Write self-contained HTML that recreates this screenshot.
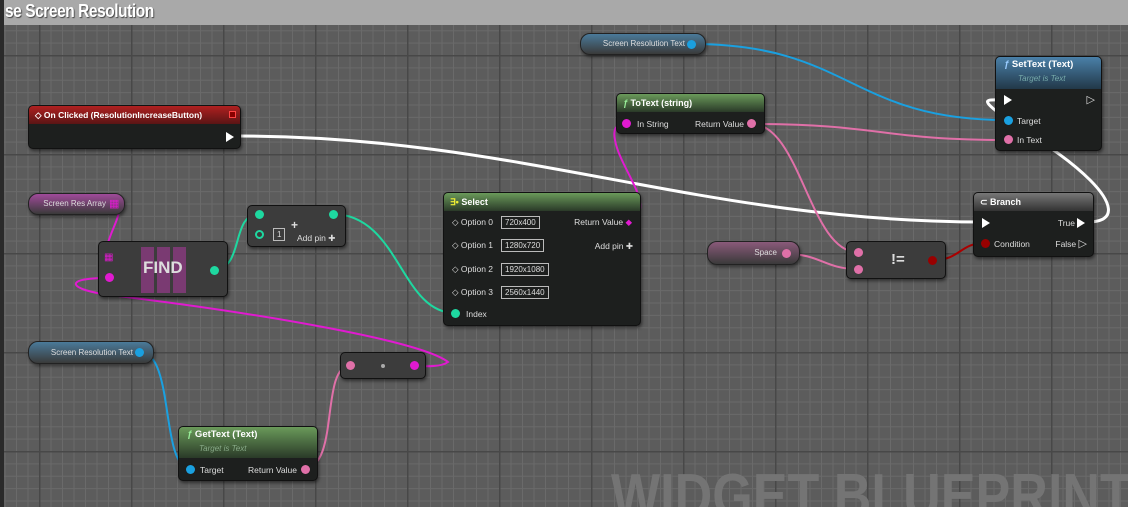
<!DOCTYPE html>
<html><head><meta charset="utf-8"><style>
*{margin:0;padding:0;box-sizing:border-box}
html,body{width:1128px;height:507px;overflow:hidden}
body{background:#5b5b5b;font-family:"Liberation Sans",sans-serif;position:relative}
#grid{position:absolute;left:4px;top:25px;width:1124px;height:482px;overflow:hidden;
background-color:#5c5c5c;
background-image:
linear-gradient(to right,#484848 1.5px,transparent 1.5px),
linear-gradient(to bottom,#484848 1.5px,transparent 1.5px),
linear-gradient(to right,#6a6a6a 1px,transparent 1px),
linear-gradient(to bottom,#6a6a6a 1px,transparent 1px);
background-size:92px 99px,92px 99px,11.5px 12.375px,11.5px 12.375px;
background-position:35px 30px,35px 30px,35px 30px,35px 30px}
#leftbar{position:absolute;left:0;top:0;width:4px;height:507px;background:#2a2a2a}
#title{position:absolute;left:4px;top:0;width:1124px;height:25px;background:#a9a9a9;color:#fff;font-size:18px;font-weight:bold;line-height:23px;padding-left:1px;text-shadow:1px 1px 1px #444;letter-spacing:-0.5px;white-space:nowrap}
#title span{display:inline-block;transform:scaleX(0.86);transform-origin:left}
#wm{position:absolute;font-size:62px;font-weight:bold;color:#747474;white-space:nowrap;transform:scaleX(0.84);transform-origin:left}
svg{position:absolute;left:0;top:0}
.n{position:absolute;background:#1d1f1e;border:1px solid #111;border-radius:5px;box-shadow:1px 2px 3px rgba(0,0,0,.5);color:#ddd;font-size:9px}
.h{height:18px;border-radius:4px 4px 0 0;color:#fff;font-size:9px;font-weight:bold;line-height:18px;padding-left:6px;white-space:nowrap;overflow:hidden}
.pill{position:absolute;background:linear-gradient(#666,#3a3a3a);border:1px solid #222;border-radius:10px;color:#ddd;font-size:8px;text-align:right;box-shadow:1px 2px 3px rgba(0,0,0,.5)}
.p{position:absolute;width:9px;height:9px;border-radius:50%}
.t{position:absolute;font-size:8.5px;color:#ddd;white-space:nowrap}
.box{position:absolute;border:1px solid #bbb;font-size:8px;color:#ddd;padding:0 3px;height:13px;line-height:11px}
.ex{position:absolute;width:0;height:0;border-top:5px solid transparent;border-bottom:5px solid transparent;border-left:8px solid #fff}
</style></head><body>
<div id="grid"><div id="wm" style="left:607px;top:436px">WIDGET BLUEPRINT</div></div>
<div id="leftbar"></div>
<div id="title"><span>se Screen Resolution</span></div>

<svg width="1128" height="507" fill="none">
<path d="M238 136 C520 136 700 222 985 222" stroke="#fff" stroke-width="3"/>
<path d="M1087 222 C1120 222 1110 200 1090 180 C1060 150 1020 130 995 110 C980 98 990 100 1003 100" stroke="#fff" stroke-width="3"/>
<path d="M692 44 C850 44 850 120 1007 120" stroke="#1aa0e0" stroke-width="2"/>
<path d="M752 124 C880 124 880 140 1007 140" stroke="#e070a8" stroke-width="2"/>
<path d="M752 124 C800 124 810 252 857 252" stroke="#e070a8" stroke-width="2"/>
<path d="M787 254 C820 254 825 269 857 269" stroke="#e070a8" stroke-width="2"/>
<path d="M934 260 C960 260 960 243 985 243" stroke="#a00" stroke-width="2"/>
<path d="M628 222 C660 210 620 170 615 140 C612 125 620 124 626 124" stroke="#e01ad0" stroke-width="2"/>
<path d="M114 204 C130 210 100 240 108 260" stroke="#e01ad0" stroke-width="2"/>
<path d="M108 278 C60 278 70 290 110 295 C250 312 420 340 448 362 C440 368 420 366 412 366" stroke="#e01ad0" stroke-width="2"/>
<path d="M213 270 C245 270 230 214 259 214" stroke="#1ed8a0" stroke-width="2"/>
<path d="M332 214 C400 214 400 313 455 313" stroke="#1ed8a0" stroke-width="2"/>
<path d="M140 352 C175 352 160 468 190 468" stroke="#1aa0e0" stroke-width="2"/>
<path d="M304 468 C340 468 320 366 350 366" stroke="#e070a8" stroke-width="2"/>
</svg>

<div class="n" style="left:28px;top:105px;width:213px;height:44px">
<div class="h" style="background:linear-gradient(#b02020,#5a1515);font-size:8.5px">◇ On Clicked (ResolutionIncreaseButton)</div>
<div style="position:absolute;right:4px;top:5px;width:7px;height:7px;border:1.5px solid #f44;background:#800"></div>
<div class="ex" style="right:6px;top:26px"></div></div>

<div class="pill" style="left:28px;top:193px;width:97px;height:22px;line-height:20px;padding-right:18px;background:linear-gradient(#a04a9a,#3a3a3a)">Screen Res Array</div>
<div class="t" style="left:109px;top:197px;color:#e01ad0;font-size:11px">▦</div>

<div class="n" style="left:98px;top:241px;width:130px;height:56px;background:#3c3c3c">
<div style="position:absolute;left:42px;top:5px;width:46px;height:46px;background:repeating-linear-gradient(90deg,#8a3a80 0 13px,transparent 13px 16px);opacity:.8"></div>
<div style="position:absolute;left:44px;top:16px;font-size:17px;font-weight:bold;color:#ddd">FIND</div>
<div class="t" style="left:5px;top:10px;color:#e01ad0;font-size:10px">▦</div>
<div class="p" style="left:6px;top:31px;background:#e01ad0"></div>
<div class="p" style="right:8px;top:24px;background:#1ed8a0"></div></div>

<div class="n" style="left:247px;top:205px;width:99px;height:42px;background:#3c3c3c">
<div class="p" style="left:7px;top:4px;background:#1ed8a0"></div>
<div class="p" style="right:7px;top:4px;background:#1ed8a0"></div>
<div class="p" style="left:7px;top:24px;border:2px solid #1ed8a0"></div>
<div class="box" style="left:25px;top:22px">1</div>
<div class="t" style="left:43px;top:12px;font-size:12px;font-weight:bold">+</div>
<div class="t" style="left:49px;top:27px">Add pin ✚</div></div>

<div class="n" style="left:443px;top:192px;width:198px;height:134px">
<div class="h" style="background:linear-gradient(#6a9a5a,#2a3a28)"><span style="color:#ee3">∃•</span> Select</div>
<div class="t" style="left:8px;top:24px">◇ Option 0</div><div class="box" style="left:57px;top:23px">720x400</div>
<div class="t" style="left:8px;top:47px">◇ Option 1</div><div class="box" style="left:57px;top:46px">1280x720</div>
<div class="t" style="left:8px;top:71px">◇ Option 2</div><div class="box" style="left:57px;top:70px">1920x1080</div>
<div class="t" style="left:8px;top:94px">◇ Option 3</div><div class="box" style="left:57px;top:93px">2560x1440</div>
<div class="p" style="left:7px;top:116px;background:#1ed8a0"></div><div class="t" style="left:22px;top:116px">Index</div>
<div class="t" style="right:8px;top:24px">Return Value <span style="color:#e01ad0">◆</span></div>
<div class="t" style="right:7px;top:48px">Add pin ✚</div></div>

<div class="n" style="left:616px;top:93px;width:149px;height:41px">
<div class="h" style="background:linear-gradient(#6a9a5a,#2a3a28)"><i style="color:#9e9">ƒ</i> ToText (string)</div>
<div class="p" style="left:5px;top:25px;background:#e01ad0"></div><div class="t" style="left:20px;top:25px">In String</div>
<div class="t" style="right:20px;top:25px">Return Value</div><div class="p" style="right:8px;top:25px;background:#e070a8"></div></div>

<div class="pill" style="left:580px;top:33px;width:126px;height:22px;line-height:20px;padding-right:20px;background:linear-gradient(#4a7a9a,#3a3a3a)">Screen Resolution Text</div>
<div class="p" style="left:687px;top:40px;background:#1aa0e0"></div>

<div class="n" style="left:995px;top:56px;width:107px;height:95px">
<div style="height:32px;border-radius:4px 4px 0 0;background:linear-gradient(#4a80a8,#223848);padding-left:8px;color:#fff;font-size:9.5px;font-weight:bold;line-height:16px"><i style="color:#9cf">ƒ</i> SetText (Text)<div style="font-size:8px;font-weight:normal;font-style:italic;color:#7aa;padding-left:14px;line-height:11px">Target is Text</div></div>
<div class="ex" style="left:8px;top:38px"></div>
<div class="t" style="right:6px;top:36px;font-size:11px">▷</div>
<div class="p" style="left:8px;top:59px;background:#1aa0e0"></div><div class="t" style="left:21px;top:59px">Target</div>
<div class="p" style="left:8px;top:78px;background:#e070a8"></div><div class="t" style="left:21px;top:78px">In Text</div></div>

<div class="n" style="left:973px;top:192px;width:121px;height:65px">
<div class="h" style="background:linear-gradient(#777,#333)">⊂ Branch</div>
<div class="ex" style="left:8px;top:25px"></div>
<div class="t" style="right:18px;top:25px">True</div><div class="ex" style="right:8px;top:25px"></div>
<div class="p" style="left:7px;top:46px;background:#900"></div><div class="t" style="left:20px;top:46px">Condition</div>
<div class="t" style="right:6px;top:44px">False <span style="font-size:11px">▷</span></div></div>

<div class="pill" style="left:707px;top:241px;width:93px;height:24px;line-height:22px;padding-right:22px;background:linear-gradient(#8a5a7a,#3a3a3a)">Space</div>
<div class="p" style="left:782px;top:249px;background:#e070a8"></div>

<div class="n" style="left:846px;top:241px;width:100px;height:38px;background:#3c3c3c">
<div class="p" style="left:7px;top:6px;background:#e070a8"></div>
<div class="p" style="left:7px;top:23px;background:#e070a8"></div>
<div style="position:absolute;left:44px;top:9px;color:#ddd;font-size:15px;font-weight:bold">!=</div>
<div class="p" style="right:8px;top:14px;background:#900"></div></div>

<div class="pill" style="left:28px;top:341px;width:126px;height:23px;line-height:21px;padding-right:20px;background:linear-gradient(#4a7a9a,#3a3a3a)">Screen Resolution Text</div>
<div class="p" style="left:135px;top:348px;background:#1aa0e0"></div>

<div class="n" style="left:340px;top:352px;width:86px;height:27px;background:#3c3c3c">
<div class="p" style="left:5px;top:8px;background:#e070a8"></div>
<div style="position:absolute;left:40px;top:11px;width:4px;height:4px;border-radius:50%;background:#aaa"></div>
<div class="p" style="right:6px;top:8px;background:#e01ad0"></div></div>

<div class="n" style="left:178px;top:426px;width:140px;height:55px">
<div style="height:31px;border-radius:4px 4px 0 0;background:linear-gradient(#6a9a5a,#2a3a28);padding-left:8px;color:#fff;font-size:9.5px;font-weight:bold;line-height:16px"><i style="color:#9e9">ƒ</i> GetText (Text)<div style="font-size:8px;font-weight:normal;font-style:italic;color:#8a8;padding-left:12px;line-height:11px">Target is Text</div></div>
<div class="p" style="left:7px;top:38px;background:#1aa0e0"></div><div class="t" style="left:21px;top:38px">Target</div>
<div class="t" style="right:20px;top:38px">Return Value</div><div class="p" style="right:7px;top:38px;background:#e070a8"></div></div>
</body></html>
